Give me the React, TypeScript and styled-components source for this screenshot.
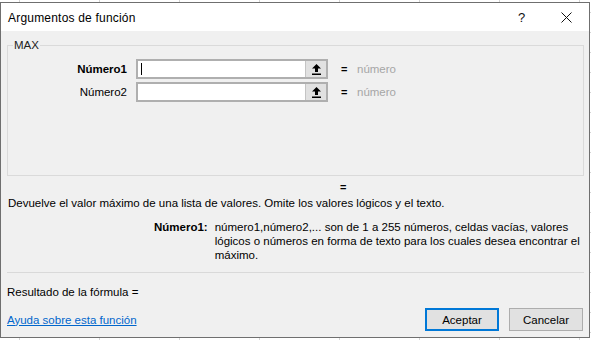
import React from 'react';
import styled, { createGlobalStyle } from 'styled-components';

const GlobalStyle = createGlobalStyle`
  html, body {
    margin: 0;
    padding: 0;
  }
  body {
    width: 591px;
    height: 340px;
    overflow: hidden;
    background-color: #fff;
    background-image:
      linear-gradient(to right, #d4d4d4 1px, transparent 1px),
      linear-gradient(to bottom, #d4d4d4 1px, transparent 1px);
    background-size: 80px 20px;
    background-position: 19px 12px;
    font-family: 'Liberation Sans', Arial, sans-serif;
  }
`;

const Dialog = styled.div`
  margin-top: 2px;
  width: 590px;
  height: 336px;
  box-sizing: border-box;
  border: 1px solid #6f6f6f;
  background: #f0f0f0;
  display: flex;
  flex-direction: column;
`;

const TitleBar = styled.div`
  height: 28px;
  background: #fff;
  display: flex;
  align-items: center;
  padding: 0 0 0 7px;
`;

const Title = styled.div`
  flex: 1;
  font-size: 12px;
  letter-spacing: 0.2px;
  color: #000;
  padding-top: 1px;
`;

const TitleButton = styled.div`
  width: 45px;
  height: 28px;
  display: flex;
  align-items: center;
  justify-content: center;
  font-size: 13px;
  color: #111;
`;

const Body = styled.div`
  flex: 1;
  padding: 7px 5px 0 6px;
  display: flex;
  flex-direction: column;
  font-size: 11.5px;
  color: #000;
`;

const Group = styled.fieldset`
  margin: 0;
  padding: 7px 0 73px 0;
  border: 1px solid #dadada;
  min-width: 0;
`;

const Legend = styled.legend`
  margin-left: 5px;
  padding: 0 1px;
  line-height: 14px;
  font-size: 11.5px;
  color: #222;
`;

const ArgRows = styled.div`
  display: grid;
  grid-template-columns: 120px 192px 6px auto;
  column-gap: 8px;
  row-gap: 3px;
  align-items: center;
`;

const ArgLabel = styled.div<{ active?: boolean }>`
  text-align: right;
  font-weight: ${(p) => (p.active ? 700 : 400)};
  font-size: 11.5px;
  padding-right: 1px;
`;

const InputBox = styled.div`
  height: 20px;
  box-sizing: border-box;
  border: 2px solid #afafaf;
  background: #fff;
  display: flex;
`;

const InputText = styled.div`
  flex: 1;
  display: flex;
  align-items: center;
  padding-left: 3px;
`;

const Caret = styled.span`
  width: 1px;
  height: 12px;
  background: #000;
`;

const CollapseButton = styled.div`
  width: 20px;
  background: #e1e1e1;
  border-left: 1px solid #c4c4c4;
  display: flex;
  align-items: center;
  justify-content: center;
`;

const Eq = styled.div`
  font-weight: 700;
  font-size: 11px;
  text-align: center;
  margin-left: 5px;
`;

const Value = styled.div`
  color: #a6a6a6;
  padding-left: 7px;
`;

const ResultEq = styled.div`
  margin-top: 4px;
  padding-left: 333px;
  line-height: 14px;
  font-weight: 700;
  font-size: 11px;
`;

const Summary = styled.div`
  margin-top: 2px;
  padding-left: 1px;
  line-height: 14px;
`;

const Help = styled.div`
  margin-top: 10px;
  display: grid;
  grid-template-columns: auto 1fr;
  column-gap: 7px;
  padding-left: 147px;
  line-height: 14px;
`;

const HelpName = styled.div`
  font-weight: 700;
`;

const Separator = styled.div`
  margin-top: 10px;
  height: 1px;
  background: #d9d9d9;
  margin-right: 0;
`;

const ResultLine = styled.div`
  margin-top: 12px;
  line-height: 14px;
`;

const Footer = styled.div`
  margin-top: 9px;
  display: flex;
  align-items: center;
  gap: 10px;
  padding-right: 1px;
`;

const HelpLink = styled.a`
  flex: 1;
  color: #0066cc;
  text-decoration: underline;
  cursor: pointer;
`;

const Button = styled.button<{ primary?: boolean }>`
  width: 74px;
  height: 23px;
  box-sizing: border-box;
  background: #e1e1e1;
  border: ${(p) => (p.primary ? '2px solid #0078d7' : '1px solid #adadad')};
  font-family: 'Liberation Sans', Arial, sans-serif;
  font-size: 11.5px;
  color: #000;
  padding: 0;
`;

function UpArrow() {
  return (
    <svg width="9" height="11" viewBox="0 0 9 11">
      <path d="M4.5 0 L9 4.5 L6 4.5 L6 8 L3 8 L3 4.5 L0 4.5 Z" fill="#000" />
      <rect x="0" y="9.5" width="9" height="1.5" fill="#000" />
    </svg>
  );
}

function CloseIcon() {
  return (
    <svg width="11" height="11" viewBox="0 0 11 11">
      <path d="M0.5 0.5 L10.5 10.5 M10.5 0.5 L0.5 10.5" stroke="#111" strokeWidth="1" />
    </svg>
  );
}

const args = [
  { name: 'Número1', active: true },
  { name: 'Número2', active: false },
];

export default function App() {
  return (
    <>
      <GlobalStyle />
      <Dialog>
        <TitleBar>
          <Title>Argumentos de función</Title>
          <TitleButton>?</TitleButton>
          <TitleButton>
            <CloseIcon />
          </TitleButton>
        </TitleBar>
        <Body>
          <Group>
            <Legend>MAX</Legend>
            <ArgRows>
              {args.map((a) => (
                <React.Fragment key={a.name}>
                  <ArgLabel active={a.active}>{a.name}</ArgLabel>
                  <InputBox>
                    <InputText>{a.active && <Caret />}</InputText>
                    <CollapseButton>
                      <UpArrow />
                    </CollapseButton>
                  </InputBox>
                  <Eq>=</Eq>
                  <Value>número</Value>
                </React.Fragment>
              ))}
            </ArgRows>
          </Group>
          <ResultEq>=</ResultEq>
          <Summary>
            Devuelve el valor máximo de una lista de valores. Omite los valores lógicos y el texto.
          </Summary>
          <Help>
            <HelpName>Número1:</HelpName>
            <div>
              número1,número2,... son de 1 a 255 números, celdas vacías, valores lógicos o
              números en forma de texto para los cuales desea encontrar el máximo.
            </div>
          </Help>
          <Separator />
          <ResultLine>Resultado de la fórmula =</ResultLine>
          <Footer>
            <HelpLink>Ayuda sobre esta función</HelpLink>
            <Button primary>Aceptar</Button>
            <Button>Cancelar</Button>
          </Footer>
        </Body>
      </Dialog>
    </>
  );
}
